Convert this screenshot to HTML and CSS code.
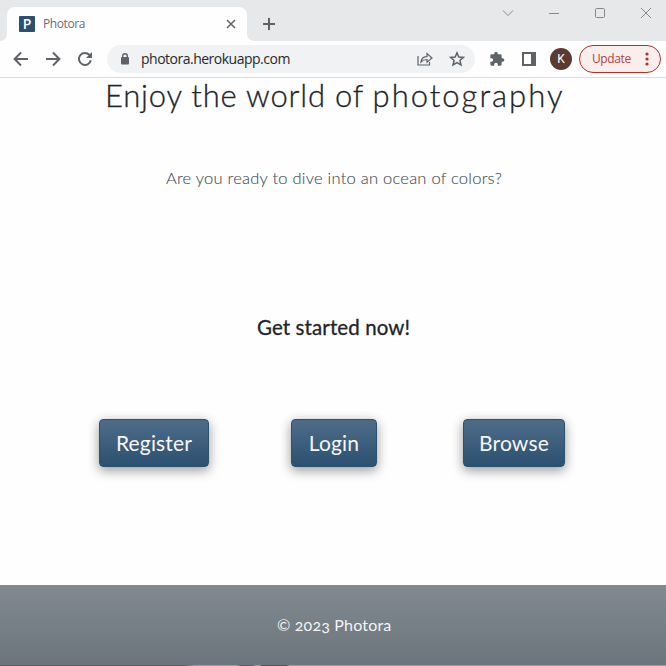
FILE: index.html
```html
<!DOCTYPE html>
<html lang="en">
<head>
<meta charset="utf-8">
<title>Photora</title>
<link rel="stylesheet" href="styles.css">
</head>
<body>
<div class="window">
  <div class="tabstrip">
    <div class="tab">
      <span class="favicon">P</span>
      <span class="tab-title">Photora</span>
      <svg class="tab-close" width="10" height="10" viewBox="0 0 10 10"><path d="M1 1l8 8M9 1l-8 8"/></svg>
    </div>
    <svg class="new-tab" width="12" height="12" viewBox="0 0 12 12"><path d="M6 0v12M0 6h12"/></svg>
    <div class="controls">
      <svg width="12" height="12" viewBox="0 0 12 12"><path d="M1 3.5l5 5 5-5"/></svg>
      <svg width="12" height="12" viewBox="0 0 12 12"><path d="M1 6.5h10"/></svg>
      <svg width="12" height="12" viewBox="0 0 12 12"><rect x="1.5" y="1.5" width="9" height="9" rx="1"/></svg>
      <svg width="12" height="12" viewBox="0 0 12 12"><path d="M1 1l10 10M11 1L1 11"/></svg>
    </div>
  </div>
  <div class="toolbar">
    <div class="nav">
      <svg width="16" height="16" viewBox="0 0 16 16"><path d="M15 8H2M8 1.5L1.6 8 8 14.5"/></svg>
      <svg width="16" height="16" viewBox="0 0 16 16"><path d="M1 8h13M8 1.5L14.4 8 8 14.5"/></svg>
      <svg width="16" height="16" viewBox="0 0 16 16"><path d="M13.8 9.2A6 6 0 1 1 12.3 3.8L14 5.5"/><path class="solid" d="M15 1v6H9z"/></svg>
    </div>
    <div class="address">
      <svg class="lock" width="10" height="12" viewBox="0 0 10 12"><rect class="solid" x="1" y="4" width="8" height="7.5" rx="1"/><path d="M2.7 4.5V3a2.3 2.3 0 0 1 4.6 0v1.5"/></svg>
      <span class="url">photora.herokuapp.com</span>
      <svg class="share" width="16" height="16" viewBox="0 0 16 16"><path d="M1 5v9h11.500v-3M4 11c.4-3.800 2.400-5.300 6-5.300V2.500L15 7l-5 4.300V8.500C7.300 8.500 5.600 9.200 4 11z"/></svg>
      <svg class="star" width="16" height="16" viewBox="0 0 16 16"><path d="M8 1.800l1.800 4.200 4.600.4-3.500 3 1.100 4.500-4-2.400-4 2.400 1.100-4.500-3.500-3 4.600-.4z"/></svg>
    </div>
    <svg class="puzzle" width="16" height="16" viewBox="0 0 24 24"><path d="M20.500 11H19V7a2 2 0 0 0-2-2h-4V3.500a2.500 2.500 0 0 0-5 0V5H4a2 2 0 0 0-2 2v3.800h1.500a2.700 2.700 0 0 1 0 5.400H2V20a2 2 0 0 0 2 2h3.800v-1.500a2.700 2.700 0 0 1 5.400 0V22H17a2 2 0 0 0 2-2v-4h1.500a2.500 2.500 0 0 0 0-5z"/></svg>
    <svg class="panel" width="14" height="14" viewBox="0 0 14 14"><path fill-rule="evenodd" d="M0 0h14v14H0zM2 2v10h7V2z"/></svg>
    <span class="avatar">K</span>
    <div class="update">
      <span class="update-label">Update</span>
      <svg width="4" height="14" viewBox="0 0 4 14"><circle cx="2" cy="2" r="1.600"/><circle cx="2" cy="7" r="1.600"/><circle cx="2" cy="12" r="1.600"/></svg>
    </div>
  </div>
  <main class="page">
    <h1><span class="w1">Enjoy the world of</span> <span class="w2">photography</span></h1>
    <p class="lead"><span>Are you ready to dive into an ocean of colors?</span></p>
    <h2><span>Get started now!</span></h2>
    <div class="actions">
      <a class="btn register">Register</a>
      <a class="btn login">Login</a>
      <a class="btn browse">Browse</a>
    </div>
  </main>
  <footer><span>© 2023 Photora</span></footer>
  <div class="edge"></div>
</div>
</body>
</html>
```
FILE: styles.css
```css
* { box-sizing: border-box; }
body { margin: 0; background: #fefefe; font-family: Lato, sans-serif; color: #212529; }
svg { flex: none; display: block; fill: none; stroke: #5f6368; }
.window { width: 666px; height: 666px; display: flex; flex-direction: column; overflow: hidden; }

.tabstrip { height: 41px; flex: none; display: flex; background: #e7e8ea; padding: 7px 0 0 7px; }
.tab { position: relative; width: 240px; height: 34px; display: flex; align-items: center; padding: 0 11px 0 12px; background: #fefefe; border-radius: 8px 8px 0 0; }
.tab::before, .tab::after { content: ""; position: absolute; bottom: 0; width: 7px; height: 7px; }
.tab::before { left: -7px; background: radial-gradient(circle at 0 0, #e7e8ea 6.5px, #fefefe 7.5px); }
.tab::after { right: -7px; background: radial-gradient(circle at 100% 0, #e7e8ea 6.5px, #fefefe 7.5px); }
.favicon { width: 16px; height: 16px; border-radius: 1px; background: #2c5070; color: #fff; font: 600 14px/16px "Open Sans", sans-serif; text-align: center; }
.tab-title { margin-left: 8px; flex: 1; font: 12px/16px "Open Sans", sans-serif; letter-spacing: -0.4px; color: #6b6e72; }
.tab-close { stroke-width: 1.5; }
.new-tab { margin: 11px 0 0 16px; stroke-width: 2; }
.controls { margin: 0 14px 0 auto; display: flex; gap: 34px; }
.controls svg { stroke: #85878a; }

.toolbar { height: 37px; flex: none; display: flex; align-items: center; border-bottom: 1px solid #d9dbdd; padding: 0 5px 0 13px; }
.nav { display: flex; gap: 16px; width: 94px; }
.nav svg { stroke-width: 2; }
.solid { fill: #5f6368; stroke: none; }
.address { width: 368px; height: 28px; display: flex; align-items: center; border-radius: 14px; background: #f0f2f3; padding: 0 10px 0 13px; }
.lock { stroke-width: 1.4; }
.url { margin-left: 11px; flex: 1; font: 14px/20px "Open Sans", sans-serif; letter-spacing: -0.5px; color: #27292c; white-space: nowrap; }
.share { margin-right: 16px; stroke-width: 1.2; }
.star { stroke-width: 1.5; }
.puzzle { margin-left: 14px; fill: #5f6368; stroke: none; }
.panel { margin-left: 17px; fill: #5f6368; stroke: none; }
.avatar { margin-left: 14px; width: 22px; height: 22px; border-radius: 50%; background: #5b3a34; color: #fff; font: 12px/22px Roboto, sans-serif; text-align: center; }
.update { margin-left: 7px; width: 82px; height: 28px; display: flex; align-items: center; justify-content: space-between; padding: 0 11px 0 12px; border: 1px solid #b2302a; border-radius: 14px; background: #faeeed; }
.update-label { font: 12px/16px "Open Sans", sans-serif; letter-spacing: -0.4px; color: #b5433c; }
.update svg { fill: #b2302a; stroke: none; }

.page { height: 507px; flex: none; display: flex; flex-direction: column; }
h1, h2, p { margin: 0; white-space: nowrap; }
h1 { height: 36px; padding-left: 105px; font-weight: 300; font-size: 31px; line-height: 34px; -webkit-text-stroke: 0.3px #212529; }
.w1 { letter-spacing: 0.8px; }
.w2 { letter-spacing: 2px; }
.lead { margin-top: 52px; padding-left: 166px; font-weight: 300; font-size: 16.5px; line-height: 24px; letter-spacing: 0.24px; color: #454b52; -webkit-text-stroke: 0.1px #454b52; }
h2 { margin-top: 124px; padding-left: 257px; font-weight: 400; font-size: 20.5px; line-height: 27px; letter-spacing: 0.1px; -webkit-text-stroke: 0.3px #212529; }
.actions { display: flex; margin: 78px 0 0 99px; }
.btn { height: 48px; border: 1px solid #2c5070; border-radius: 4px; background: linear-gradient(#4e6c88, #2c5070); box-shadow: 0 4px 12px rgba(0, 0, 0, .3), 0 2px 12px rgba(0, 0, 0, .12); color: #f6f6f6; font-size: 21px; line-height: 45px; letter-spacing: 0.15px; text-align: center; }
.register { width: 110px; }
.login { width: 86px; margin-left: 82px; }
.browse { width: 102px; margin-left: 86px; }
footer { height: 80px; flex: none; padding-left: 277px; font-size: 16px; line-height: 80px; letter-spacing: 0.18px; color: #f4f4f4; font-variant-numeric: oldstyle-nums; background: linear-gradient(#828a90, #6c757d); }
.edge { height: 1px; background: linear-gradient(90deg, #5d6068 0 185px, #9da1a3 195px 237px, #5c5a68 240px 252px, #a2a0a6 256px 260px, #54505a 262px 286px, #a2a0a6 290px 660px); }
```
